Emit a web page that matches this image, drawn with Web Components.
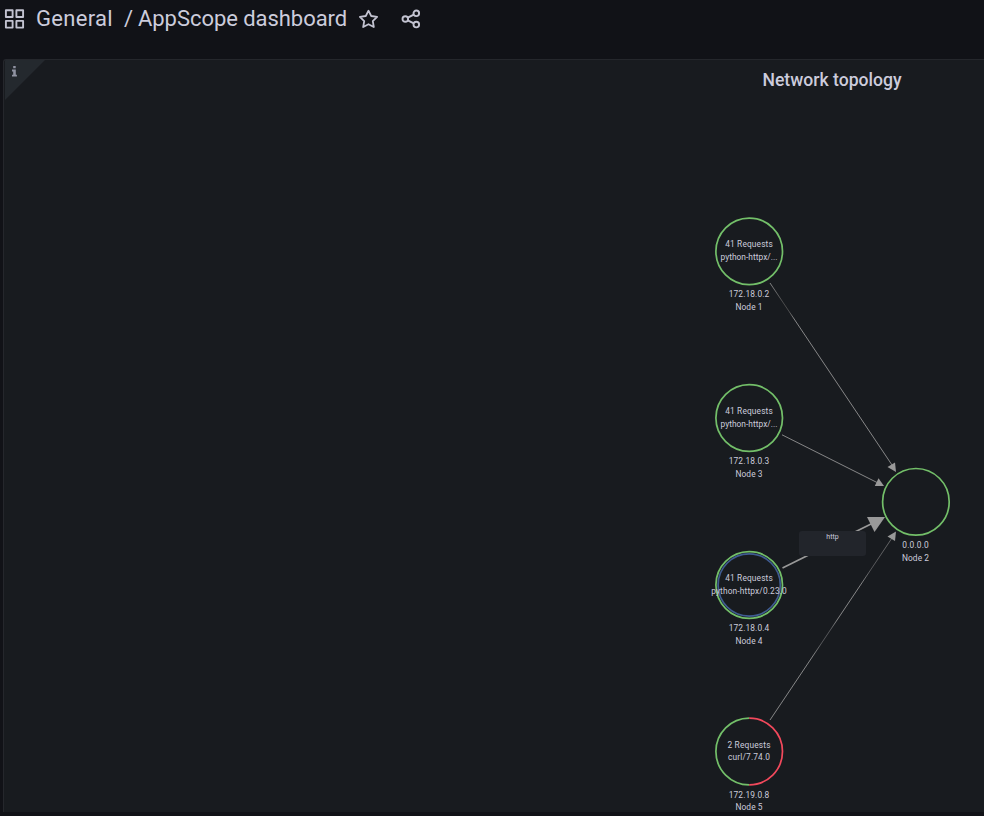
<!DOCTYPE html>
<html lang="en">
<head>
<meta charset="utf-8">
<title>AppScope dashboard</title>
<style>
html,body{margin:0;height:100%;background:#111217;overflow:hidden}
body{font-family:Roboto,"Liberation Sans",sans-serif;color:#ccccdc}
</style>
</head>
<body>
<dash-page></dash-page>
<script>
const define = (name, markup, setup) => {
  const tpl = document.createElement('template');
  tpl.innerHTML = markup;
  customElements.define(name, class extends HTMLElement {
    connectedCallback() {
      if (this.shadowRoot) return;
      const root = this.attachShadow({mode: 'open'});
      root.append(tpl.content.cloneNode(true));
      if (setup) setup(this, root);
    }
  });
};

define('dash-header', `<style>
:host{display:flex;align-items:center;height:38px;flex:none;padding-left:4px;color:#ccccdc;font-size:22px;line-height:38px;white-space:pre}
svg{display:block;flex:none}
.apps{margin-right:11px}
.folder{width:77px;letter-spacing:.3px}
.sep{width:14px;margin-left:11px}
.name{width:209px;letter-spacing:-.05px}
.star{margin-left:11px}.share{margin-left:21px}
</style>
<svg class="apps" width="21" height="20" viewBox="0 0 21 20" fill="none" stroke="#c3c3d1" stroke-width="1.9"><path d="M1.9 1.3h6.7v6.7H1.9zM12.4 1.3h6.7v6.7h-6.7zM1.9 11.9h6.7v6.7H1.9zM12.4 11.9h6.7v6.7h-6.7z" stroke-linejoin="round"/></svg>
<span class="folder">General</span><span class="sep">/</span><span class="name">AppScope dashboard</span>
<svg class="star" width="21" height="20" viewBox="0 0 21 20" fill="none" stroke="#c3c3d1" stroke-width="1.8" stroke-linejoin="round"><path d="M10.5 1.7 13.2 7l5.9.9-4.3 4.2 1 5.9-5.3-2.8L5.2 18l1-5.9L1.9 7.9 7.8 7z"/></svg>
<svg class="share" width="22" height="20" viewBox="0 0 22 20" fill="none" stroke="#c3c3d1" stroke-width="1.9"><circle cx="5.3" cy="10" r="2.8"/><circle cx="16.3" cy="4.3" r="2.8"/><circle cx="16.3" cy="15.6" r="2.8"/><path d="m7.8 8.7 6-3.1M7.8 11.3l6 3"/></svg>`);

/* One graph node: a status ring with two stat lines inside and two captions beneath. */
define('graph-node', `<style>
:host{position:absolute;width:90px;height:104px;display:block}
svg{display:block;overflow:visible}
text{font:8.35px Roboto,"Liberation Sans",sans-serif;fill:#ccccdc;text-anchor:middle}
.bg{fill:#181b1f}
.ring{fill:none;stroke:#73bf69;stroke-width:1.7}
.err{fill:none;stroke:#f2495c;stroke-width:1.7}
.hover{fill:none;stroke:#3f5c91;stroke-width:1.7}
</style><svg width="90" height="104"></svg>`, (el, root) => {
  const a = n => el.getAttribute(n) || '';
  const [x, y] = a('at').split(',').map(Number);
  el.style.left = (x - 45) + 'px';
  el.style.top = (y - 45) + 'px';
  const oy = Number(a('caption-shift') || 0);
  const t = (s, w, dy) => s ? `<text x="${45 + Number(a('text-dx') || 0)}" y="${45 + dy}" textLength="${w}">${s}</text>` : '';
  root.querySelector('svg').innerHTML =
    `<g transform="translate(${a('ring-offset') || '.2 0'})"><circle class="bg" cx="45" cy="45" r="33"/>` +
    (el.hasAttribute('error')
      ? '<path class="ring" d="M45 78.3a33.3 33.3 0 0 1 0-66.6"/><path class="err" d="M45 11.7a33.3 33.3 0 0 1 0 66.6"/>'
      : '<circle class="ring" cx="45" cy="45" r="33.3"/>') +
    (el.hasAttribute('active') ? '<circle class="hover" cx="45" cy="45" r="31.1"/>' : '') + '</g>' +
    t(a('main'), a('main-w'), -4.3) + t(a('sub'), a('sub-w'), 8.5 + oy) +
    t(a('ip'), a('ip-w') || 40.5, 45.7) + t(a('name'), 27, 58.6 + oy);
});

define('edge-label', `<style>
:host{position:absolute;left:795px;top:471px;width:67px;height:25px;border-radius:3px;background:#22252b;text-align:center;box-sizing:border-box;padding-top:1px;font-size:7px;line-height:10px}
</style><slot></slot>`);

define('graph-edges', `<style>:host{position:absolute;inset:0}svg{display:block}line{stroke:#999;stroke-width:.85}polygon{fill:#999}</style>
<svg width="980" height="756" viewBox="4 60 980 756">
<defs>
<linearGradient id="a" gradientUnits="userSpaceOnUse" x1="770" y1="283" x2="896" y2="471"><stop offset="0" stop-color="#999"/><stop offset=".1" stop-color="#555"/><stop offset=".15" stop-color="#555"/><stop offset=".19" stop-color="#999"/></linearGradient>
<linearGradient id="b" gradientUnits="userSpaceOnUse" x1="770" y1="720" x2="896" y2="532"><stop offset="0" stop-color="#999"/><stop offset=".34" stop-color="#999"/><stop offset=".41" stop-color="#606164"/><stop offset=".48" stop-color="#606164"/><stop offset=".53" stop-color="#999"/><stop offset=".72" stop-color="#999"/><stop offset=".8" stop-color="#606164"/><stop offset="1" stop-color="#777"/></linearGradient>
</defs>
<line x1="770" y1="283" x2="892" y2="465" style="stroke:url(#a)"/>
<line x1="782" y1="434.8" x2="878" y2="483"/>
<line x1="782.5" y1="568" x2="872" y2="523.5" style="stroke-width:1.7"/>
<line x1="770" y1="720" x2="892" y2="538" style="stroke:url(#b)"/>
<polygon points="896,472 887.5,467 895,462.6"/>
<polygon points="884,486 874.8,486 878.5,478.2"/>
<polygon points="885,517 867,517 874.5,532"/>
<polygon points="896,531.5 895,541 887.5,536.5"/>
</svg>`);

define('topology-panel', `<style>
:host{display:block;position:relative;flex:none;height:752px;margin:21px 0 0 3px;border:1px solid #25272c;border-right:0;border-bottom:0;border-radius:3px 0 0 0;background:#181b1f;overflow:hidden}
h2{margin:0;width:1656px;text-align:center;font-weight:500;font-size:17.6px;line-height:40px}
.corner{position:absolute;left:1px;top:0;width:40px;height:40px;background:#24292e;clip-path:polygon(0 0,100% 0,0 100%)}
.info{position:absolute;left:7px;top:6px;fill:#9093a2}
</style>
<graph-edges></graph-edges>
<div class="corner"></div><svg class="info" width="7" height="11"><path d="M2.2 0h2.5v2.3H2.2zM1 3.6h3.8v5.2h1.1V10.6H1V8.8h1.2V5.4H1z"/></svg>
<h2>Network topology</h2>
<graph-node at="745,191" ring-offset=".2 .35" main="41 Requests" main-w="47.5" sub="python-httpx/..." sub-w="57" ip="172.18.0.2" name="Node 1"></graph-node>
<graph-node at="745,358" main="41 Requests" main-w="47.5" sub="python-httpx/..." sub-w="57" ip="172.18.0.3" name="Node 3"></graph-node>
<graph-node at="745,525" active main="41 Requests" main-w="47.5" sub="python-httpx/0.23.0" sub-w="75.5" ip="172.18.0.4" name="Node 4"></graph-node>
<graph-node at="745,692" ring-offset=".2 -.5" error caption-shift="-.7" main="2 Requests" main-w="43" sub="curl/7.74.0" sub-w="42" ip="172.19.0.8" name="Node 5"></graph-node>
<graph-node at="912,442" ring-offset="-.1 -.2" text-dx="-.5" ip="0.0.0.0" ip-w="26.5" name="Node 2"></graph-node>
<edge-label>http</edge-label>`);

define('dash-page', `<style>:host{display:flex;flex-direction:column;height:816px;background:#111217}</style>
<dash-header></dash-header><topology-panel></topology-panel>`);
</script>
</body>
</html>
